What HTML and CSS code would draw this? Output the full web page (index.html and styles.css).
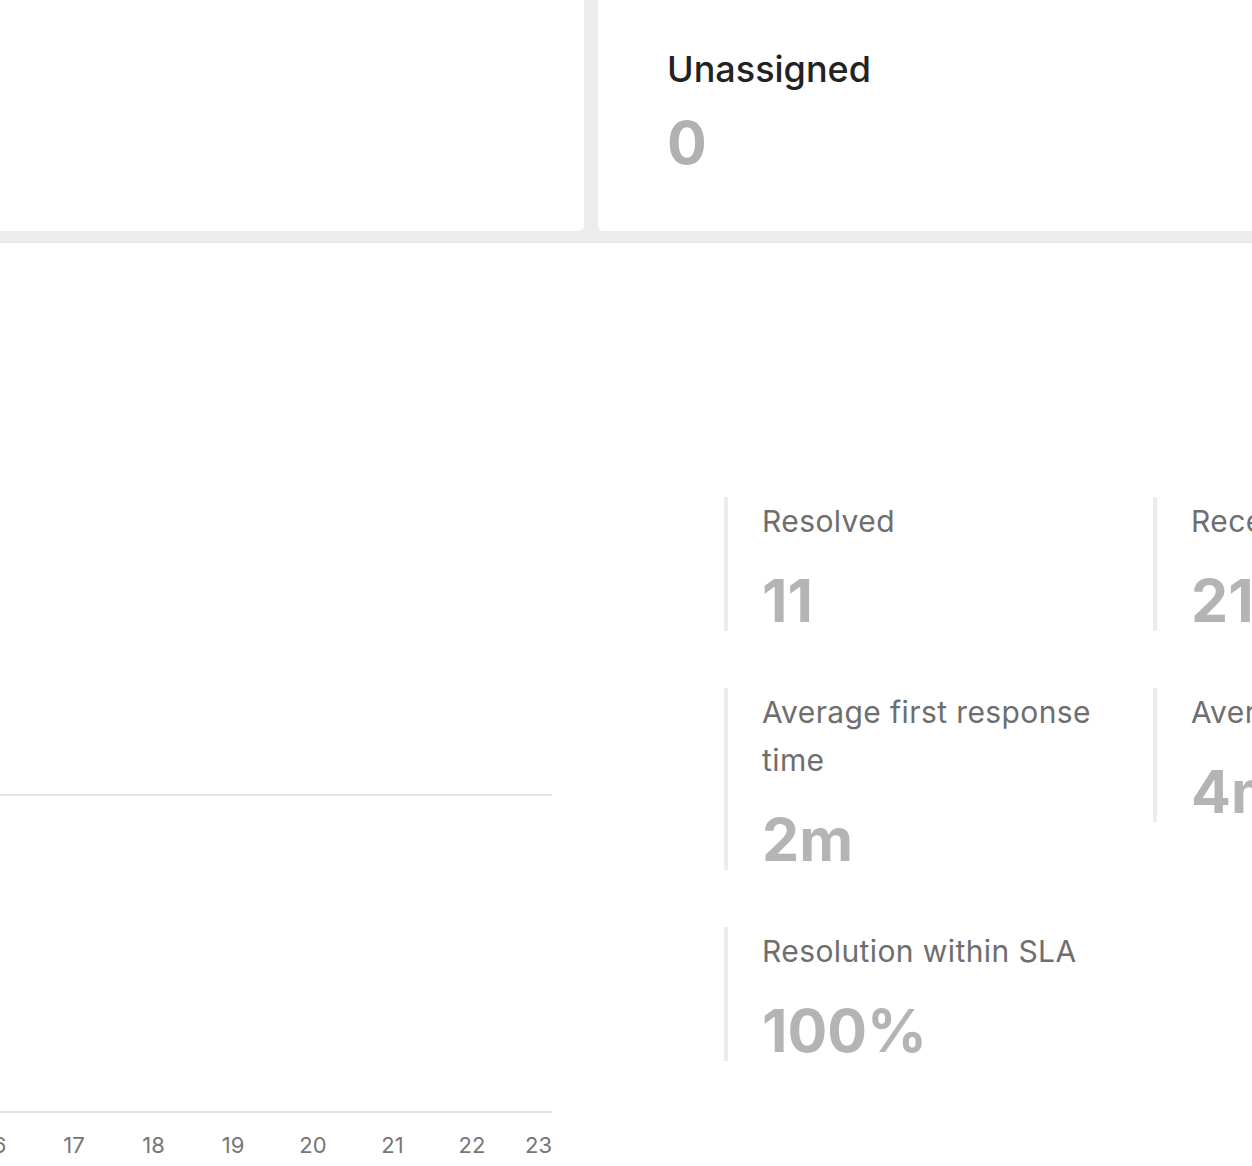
FILE: index.html
```html
<!DOCTYPE html>
<html lang="en">
<head>
<meta charset="utf-8">
<title>Dashboard</title>
<link rel="stylesheet" href="styles.css">
</head>
<body>
<div class="page">
  <div class="cards">
    <div class="card card-left"></div>
    <div class="card card-right">
      <div class="card-title">Unassigned</div>
      <div class="card-value">0</div>
    </div>
  </div>
  <div class="panel">
    <div class="chart">
      <svg class="chart-svg" width="552" height="669" viewBox="0 0 552 669">
        <line class="grid" x1="0" y1="298" x2="552" y2="298"></line>
        <line class="grid" x1="0" y1="615" x2="552" y2="615"></line>
        <text class="tick" x="-5" y="656" text-anchor="middle">16</text>
        <text class="tick" x="74" y="656" text-anchor="middle">17</text>
        <text class="tick" x="153.5" y="656" text-anchor="middle">18</text>
        <text class="tick" x="233" y="656" text-anchor="middle">19</text>
        <text class="tick" x="313" y="656" text-anchor="middle">20</text>
        <text class="tick" x="392.5" y="656" text-anchor="middle">21</text>
        <text class="tick" x="472" y="656" text-anchor="middle">22</text>
        <text class="tick" x="552" y="656" text-anchor="end">23</text>
      </svg>
    </div>
    <div class="stats">
      <div class="stat">
        <div class="stat-label">Resolved</div>
        <div class="stat-value">11</div>
      </div>
      <div class="stat">
        <div class="stat-label">Received</div>
        <div class="stat-value">21</div>
      </div>
      <div class="stat">
        <div class="stat-label">Average first response time</div>
        <div class="stat-value">2m</div>
      </div>
      <div class="stat">
        <div class="stat-label">Average resolution time</div>
        <div class="stat-value">4m</div>
      </div>
      <div class="stat">
        <div class="stat-label">Resolution within SLA</div>
        <div class="stat-value">100%</div>
      </div>
    </div>
  </div>
</div>
</body>
</html>
```
FILE: styles.css
```css
html, body {
  margin: 0;
  padding: 0;
  background: #ececec;
  font-family: Inter, "Noto Sans", sans-serif;
}
.page {
  width: 1252px;
  height: 1166px;
  overflow: hidden;
  display: flex;
  flex-direction: column;
}
.cards {
  display: flex;
  gap: 14px;
  height: 231px;
  flex: none;
}
.card {
  background: #fff;
}
.card-left {
  width: 584px;
  border-radius: 0 0 5px 0;
}
.card-right {
  flex: 1;
  border-radius: 0 0 0 5px;
  padding: 48px 0 0 69px;
}
.card-title {
  font-size: 36px;
  line-height: 43px;
  font-weight: 500;
  color: #222;
}
.card-value {
  margin-top: 22px;
  font-size: 59px;
  line-height: 59px;
  font-weight: 700;
  color: #b1b1b1;
}
.panel {
  margin-top: 12px;
  flex: 1;
  background: #fff;
  display: flex;
  padding-top: 254px;
  overflow: hidden;
  box-shadow: 0 -1px 0 #e4e4e4;
}
.chart {
  width: 552px;
  flex: none;
}
.chart-svg {
  display: block;
  overflow: visible;
}
.grid {
  stroke: #e2e2e2;
  stroke-width: 2;
}
.tick {
  font-family: Inter, "Noto Sans", sans-serif;
  font-size: 22px;
  fill: #767676;
}
.stats {
  margin-left: 172px;
  display: grid;
  grid-template-columns: 429px 429px;
  row-gap: 57px;
  align-items: start;
  align-content: start;
  flex: none;
}
.stat {
  border-left: 4px solid #ececec;
  padding: 0 30px 0 34px;
}
.stat-label {
  font-size: 30px;
  line-height: 48px;
  letter-spacing: 0.4px;
  color: #6e6e6e;
  margin-bottom: 26px;
}
.stat-value {
  font-size: 59px;
  line-height: 60px;
  font-weight: 700;
  color: #b4b4b4;
}
```
